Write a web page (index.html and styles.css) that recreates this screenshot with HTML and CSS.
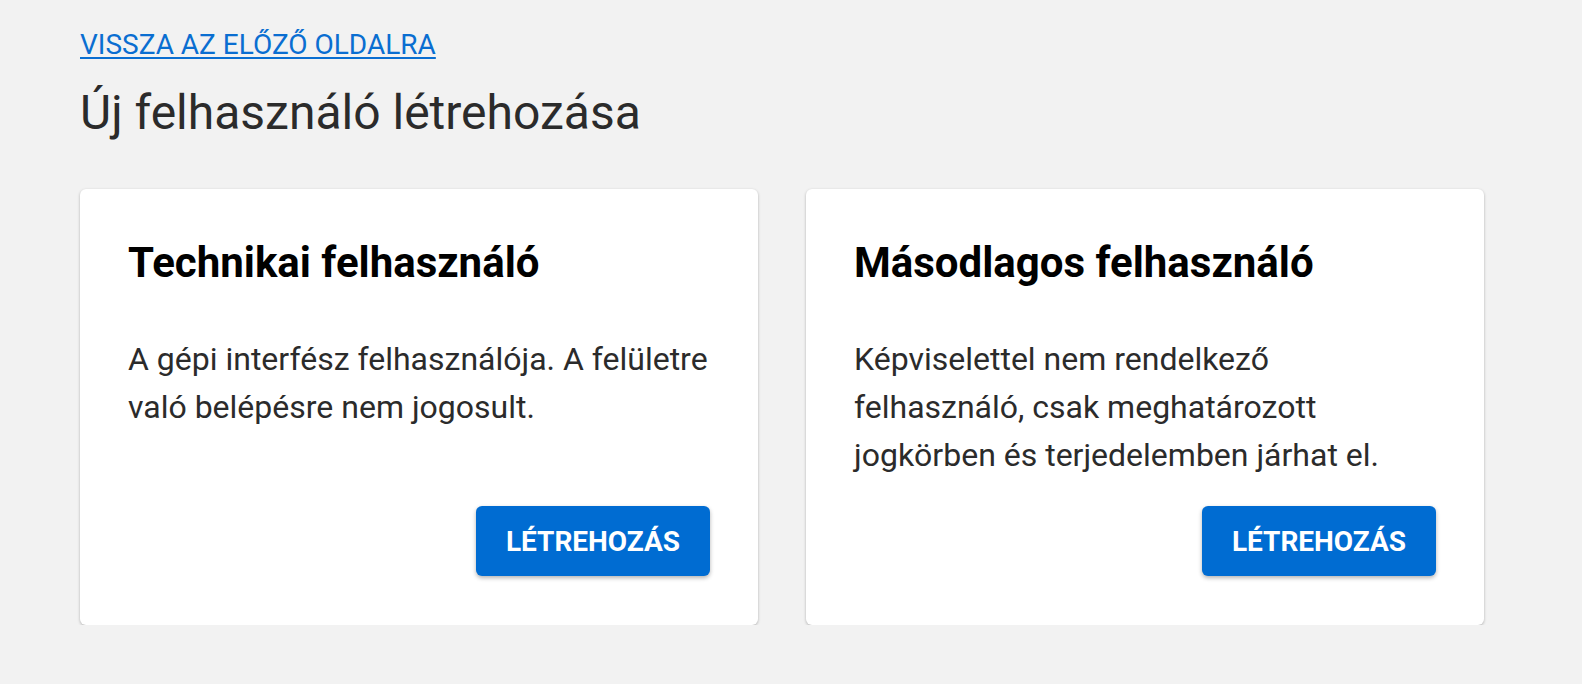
FILE: index.html
```html
<!DOCTYPE html>
<html lang="hu">
<head>
<meta charset="utf-8">
<title>Új felhasználó létrehozása</title>
<link rel="stylesheet" href="styles.css">
</head>
<body>
<main class="page">
  <a class="back-link" href="#">VISSZA AZ ELŐZŐ OLDALRA</a>
  <h1 class="page-title">Új felhasználó létrehozása</h1>
  <div class="cards">
    <section class="card">
      <h2 class="card-title">Technikai felhasználó</h2>
      <p class="card-text">A gépi interfész felhasználója. A felületre való belépésre nem jogosult.</p>
      <div class="card-actions"><button class="btn">LÉTREHOZÁS</button></div>
    </section>
    <section class="card">
      <h2 class="card-title">Másodlagos felhasználó</h2>
      <p class="card-text">Képviselettel nem rendelkező felhasználó, csak meghatározott jogkörben és terjedelemben járhat el.</p>
      <div class="card-actions"><button class="btn">LÉTREHOZÁS</button></div>
    </section>
  </div>
</main>
</body>
</html>
```
FILE: styles.css
```css
html, body {
  margin: 0;
  padding: 0;
  background: #f2f2f2;
  font-family: Roboto, "Liberation Sans", sans-serif;
  color: #2b2b2b;
}
.page {
  padding: 28px 80px 0 80px;
}
.back-link {
  display: inline-block;
  font-size: 28px;
  line-height: 34px;
  color: #0a6ed1;
  text-decoration: underline;
  text-underline-offset: 3px;
  text-decoration-thickness: 2px;
}
.page-title {
  margin: 23px 0 0;
  font-size: 48px;
  font-weight: 400;
  line-height: 56px;
  color: #2b2b2b;
}
.cards {
  display: flex;
  gap: 48px;
  margin-top: 48px;
}
.card {
  width: 678px;
  height: 436px;
  box-sizing: border-box;
  background: #fff;
  border-radius: 6px;
  box-shadow: 0 1px 3px rgba(0,0,0,0.28);
  padding: 49px 48px 49px;
  display: flex;
  flex-direction: column;
}
.card-title {
  margin: 0;
  font-size: 42px;
  font-weight: 700;
  line-height: 50px;
  color: #000;
}
.card-text {
  margin: 47px 0 0;
  font-size: 32px;
  line-height: 48px;
  color: #2b2b2b;
}
.card-actions {
  margin-top: auto;
  display: flex;
  justify-content: flex-end;
}
.btn {
  width: 234px;
  height: 70px;
  border: none;
  border-radius: 6px;
  background: #006cd2;
  color: #fff;
  font-family: Roboto, "Liberation Sans", sans-serif;
  font-size: 28px;
  font-weight: 700;
  box-shadow: 0 2px 4px rgba(0,0,0,0.3);
  cursor: pointer;
}
```
